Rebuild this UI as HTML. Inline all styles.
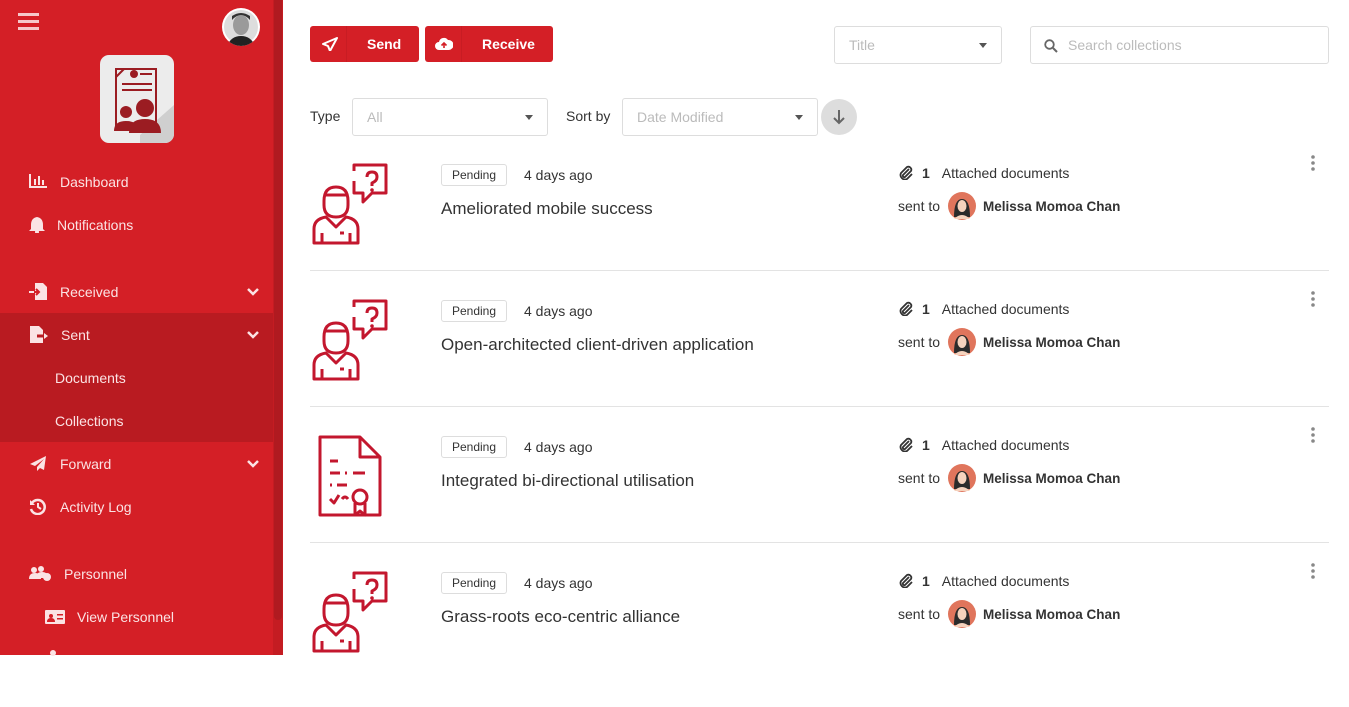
<!DOCTYPE html>
<html><head><meta charset="utf-8"><style>
*{box-sizing:border-box;margin:0;padding:0}
body{width:1349px;height:655px;overflow:hidden;font-family:"Liberation Sans",sans-serif;background:#fff;position:relative;color:#333}
.sb{position:absolute;left:0;top:0;width:273px;height:655px;background:#d41f26;color:#fde;}
.scr{position:absolute;left:273px;top:0;width:10px;height:655px;background:#c41c22}
.scr i{position:absolute;left:1px;top:0;width:8px;height:620px;background:#b01a20;border-radius:0 0 4px 4px}
.it{position:absolute;left:0;width:273px;font-size:14px;color:#fbe3e4;display:flex;align-items:center}
.it svg{position:absolute}
.chev{position:absolute;right:14px;top:50%;margin-top:-5px}
.sub{position:absolute;left:0;top:313px;width:273px;height:129px;background:#b91b21}
.abs{position:absolute}
.btn{position:absolute;top:26px;height:36px;background:#d41f26;border-radius:3px;color:#fff;font-weight:bold;font-size:14px;display:flex;align-items:center}
.sel{position:absolute;border:1px solid #ddd;border-radius:3px;color:#bbb;font-size:14px;display:flex;align-items:center;padding-left:14px}
.dd:after{content:"";position:absolute;right:14px;top:50%;margin-top:-2px;border:4px solid transparent;border-top:5px solid #555;border-bottom:0}
.row{position:absolute;left:310px;width:1019px;height:136px}
.row .line{position:absolute;left:0;right:0;bottom:0;height:1px;background:#e3e3e3}
.badge{position:absolute;left:131px;top:1px;width:66px;height:22px;border:1px solid #ddd;border-radius:3px;font-size:12px;color:#333;text-align:center;line-height:20px}
.ago{position:absolute;left:214px;top:4px;font-size:14px;color:#333}
.ttl{position:absolute;left:131px;top:36px;font-size:17px;color:#333}
.att{position:absolute;left:588px;top:2px;font-size:14px;color:#333}
.snt{position:absolute;left:588px;top:29px;font-size:14px;color:#333;display:flex;align-items:center}
.snt b{font-size:13.5px}
.kb{position:absolute;left:1000px;top:-9px}
</style></head><body>
<div class="sb">
 <svg class="abs" style="left:18px;top:13px" width="21" height="18"><rect y="0" width="21" height="3" fill="#f6c8ca"/><rect y="7" width="21" height="3" fill="#f6c8ca"/><rect y="14" width="21" height="3" fill="#f6c8ca"/></svg>
 <div class="abs" style="left:222px;top:8px;width:38px;height:38px;border-radius:50%;background:#fff;overflow:hidden"><svg width="38" height="38"><circle cx="19" cy="19" r="17" fill="#ddd"/><ellipse cx="19" cy="17" rx="8" ry="10" fill="#9a9a9a"/><path d="M10 12q9-10 18 0v-4q-9-6-18 0z" fill="#333"/><path d="M5 38q4-10 14-10t14 10z" fill="#222"/></svg></div>
 <div class="abs" style="left:100px;top:55px;width:74px;height:88px;background:#ececec;border-radius:9px;overflow:hidden">
  <svg width="74" height="88"><path d="M40 80l34-30v38H40z" fill="#cfcfcf"/><path d="M16 14h40v56H16z" fill="#ececec" stroke="#9b1c22" stroke-width="2"/><path d="M16 22l8-8" stroke="#9b1c22" stroke-width="2"/><circle cx="34" cy="19" r="4" fill="#9b1c22"/><rect x="40" y="18" width="12" height="2" fill="#9b1c22"/><rect x="22" y="28" width="30" height="2" fill="#9b1c22"/><rect x="22" y="34" width="30" height="2" fill="#9b1c22"/><circle cx="26" cy="57" r="6" fill="#9b1c22"/><circle cx="45" cy="53" r="9" fill="#9b1c22"/><path d="M14 76q0-10 12-10t12 10z" fill="#9b1c22"/><path d="M29 78q0-14 16-14t16 14z" fill="#9b1c22"/></svg>
 </div>
 <div class="it" style="top:172px;height:20px"><svg style="left:29px;top:2px" width="18" height="14"><path d="M1 0v13h17" stroke="#fbe3e4" stroke-width="2" fill="none"/><rect x="5" y="5" width="2" height="6" fill="#fbe3e4"/><rect x="9" y="2" width="2" height="9" fill="#fbe3e4"/><rect x="13" y="6" width="2" height="5" fill="#fbe3e4"/></svg><span style="margin-left:60px">Dashboard</span></div>
 <div class="it" style="top:215px;height:20px"><svg style="left:29px;top:1px" width="16" height="17"><path d="M8 1q6 1 6 8v4l2 2H0l2-2V9q0-7 6-8z" fill="#fbe3e4"/><circle cx="8" cy="16" r="2" fill="#fbe3e4"/></svg><span style="margin-left:57px">Notifications</span></div>
 <div class="it" style="top:282px;height:20px"><svg style="left:29px;top:0" width="18" height="19"><path d="M6 1h8l4 4v13H6z" fill="#fbe3e4"/><path d="M0 10h10M7 7l3 3-3 3" stroke="#d41f26" stroke-width="2" fill="none"/><path d="M0 10h5" stroke="#fbe3e4" stroke-width="2"/></svg><span style="margin-left:60px">Received</span><svg class="chev" width="12" height="9"><path d="M1 2l5 5 5-5" stroke="#fbe3e4" stroke-width="2.5" fill="none"/></svg></div>
 <div class="sub"></div>
 <div class="it" style="top:325px;height:20px"><svg style="left:29px;top:0" width="20" height="19"><path d="M1 1h9l4 4v13H1z" fill="#fbe3e4"/><path d="M8 11h8" stroke="#b91b21" stroke-width="3"/><path d="M15 8l4 3-4 3z" fill="#fbe3e4"/></svg><span style="margin-left:61px">Sent</span><svg class="chev" width="12" height="9"><path d="M1 2l5 5 5-5" stroke="#fbe3e4" stroke-width="2.5" fill="none"/></svg></div>
 <div class="it" style="top:368px;height:20px"><span style="margin-left:55px">Documents</span></div>
 <div class="it" style="top:411px;height:20px"><span style="margin-left:55px">Collections</span></div>
 <div class="it" style="top:454px;height:20px"><svg style="left:29px;top:1px" width="18" height="17"><path d="M17 1L1 9l5 2 9-7-7 8v4l3-3 4 2z" fill="#fbe3e4"/></svg><span style="margin-left:60px">Forward</span><svg class="chev" width="12" height="9"><path d="M1 2l5 5 5-5" stroke="#fbe3e4" stroke-width="2.5" fill="none"/></svg></div>
 <div class="it" style="top:497px;height:20px"><svg style="left:29px;top:1px" width="18" height="17"><path d="M3 5a7 7 0 1 1-1 6" stroke="#fbe3e4" stroke-width="2.5" fill="none"/><path d="M1 2v5h5z" fill="#fbe3e4"/><path d="M9 5v4l3 2" stroke="#fbe3e4" stroke-width="2" fill="none"/></svg><span style="margin-left:60px">Activity Log</span></div>
 <div class="it" style="top:564px;height:20px"><svg style="left:29px;top:2px" width="24" height="16"><circle cx="5" cy="4" r="3" fill="#fbe3e4"/><circle cx="12" cy="3" r="3" fill="#fbe3e4"/><path d="M0 13q0-6 6-6t6 6z" fill="#fbe3e4"/><path d="M7 12q0-6 6-6t6 6z" fill="#fbe3e4"/><circle cx="18" cy="11" r="4" fill="#fbe3e4"/></svg><span style="margin-left:64px">Personnel</span></div>
 <div class="it" style="top:607px;height:20px"><svg style="left:45px;top:3px" width="20" height="14"><rect width="20" height="14" rx="1" fill="#fbe3e4"/><circle cx="6" cy="6" r="2" fill="#d41f26"/><path d="M2 12q0-4 4-4t4 4z" fill="#d41f26"/><rect x="12" y="4" width="6" height="1.5" fill="#d41f26"/><rect x="12" y="8" width="6" height="1.5" fill="#d41f26"/></svg><span style="margin-left:77px">View Personnel</span></div>
 <svg class="abs" style="left:46px;top:648px" width="20" height="8"><circle cx="7" cy="5" r="3" fill="#fbe3e4"/></svg>
</div>
<div class="scr"><i></i></div>

<div class="btn" style="left:310px;width:109px"><svg style="position:absolute;left:12px;top:11px" width="16" height="14"><path d="M15 1L1 7l5 2 2 5z" stroke="#fff" stroke-width="2" fill="none" stroke-linejoin="round"/></svg><div style="position:absolute;left:36px;top:0;bottom:0;width:1px;background:#c81c23"></div><span style="margin-left:57px">Send</span></div>
<div class="btn" style="left:425px;width:128px"><svg style="position:absolute;left:10px;top:11px" width="18" height="14"><path d="M4 13a4 4 0 0 1 0-8 5 5 0 0 1 9-2 4 4 0 0 1 1 10z" fill="#fff"/><path d="M9 11V6M6.5 8.5L9 6l2.5 2.5" stroke="#d41f26" stroke-width="1.6" fill="none"/></svg><div style="position:absolute;left:36px;top:0;bottom:0;width:1px;background:#c81c23"></div><span style="margin-left:57px">Receive</span></div>

<div class="sel dd" style="left:834px;top:26px;width:168px;height:38px">Title</div>
<div class="sel" style="left:1030px;top:26px;width:299px;height:38px;padding-left:37px">Search collections<svg style="position:absolute;left:13px;top:12px" width="14" height="14"><circle cx="5.5" cy="5.5" r="4.3" stroke="#666" stroke-width="1.8" fill="none"/><path d="M9 9l4 4" stroke="#666" stroke-width="2"/></svg></div>

<div class="abs" style="left:310px;top:108px;font-size:14px;color:#333">Type</div>
<div class="sel dd" style="left:352px;top:98px;width:196px;height:38px">All</div>
<div class="abs" style="left:566px;top:108px;font-size:14px;color:#333">Sort by</div>
<div class="sel dd" style="left:622px;top:98px;width:196px;height:38px">Date Modified</div>
<div class="abs" style="left:821px;top:99px;width:36px;height:36px;border-radius:50%;background:#ddd"><svg width="36" height="36"><path d="M18 11v13M13 19l5 5 5-5" stroke="#666" stroke-width="2" fill="none"/></svg></div>

<div class="row" style="top:163px">
 <svg class="abs" style="left:0;top:0" width="80" height="82"><g stroke="#c3172e" stroke-width="3" fill="none" stroke-linejoin="round"><path d="M44 2h32v28H62l-9 9v-9h-9V18"/><path d="M49 2h-5v6"/><path d="M57 14q0-5 5-5t5 5q0 4-5 6v3"/><path d="M14 38q0-14 12-14t12 14v4q0 12-12 12t-12-12z"/><path d="M14 32h24"/><path d="M4 80V66q0-10 12-12l10 10 10-10q12 2 12 12v14z"/><path d="M12 70v10M40 70v10M30 70h4"/></g><circle cx="62" cy="27" r="1.8" fill="#c3172e"/></svg>
 <div class="badge">Pending</div><div class="ago">4 days ago</div><div class="ttl">Ameliorated mobile success</div>
 <div class="att"><svg style="vertical-align:-2px" width="16" height="15"><path d="M11 4L5 10a1.5 1.5 0 0 0 2 2l6-6a3 3 0 0 0-4-4L3 8a4.5 4.5 0 0 0 6 6l5-5" stroke="#333" stroke-width="1.8" fill="none"/></svg><b style="margin-left:8px">1</b><span style="margin-left:12px">Attached documents</span></div>
 <div class="snt">sent to<svg style="margin-left:8px" width="28" height="28"><circle cx="14" cy="14" r="14" fill="#e0755c"/><path d="M6 25q0-18 8-18t8 18z" fill="#2b2b2b"/><ellipse cx="14" cy="14" rx="4.5" ry="6" fill="#f5d2bd"/><path d="M6 27q8-8 16 0" fill="#f5d2bd"/></svg><b style="margin-left:7px">Melissa Momoa Chan</b></div>
 <svg class="kb" width="6" height="18"><circle cx="3" cy="3" r="1.8" fill="#888"/><circle cx="3" cy="9" r="1.8" fill="#888"/><circle cx="3" cy="15" r="1.8" fill="#888"/></svg>
 <div class="line" style="bottom:28px"></div>
</div>
<div class="row" style="top:299px">
 <svg class="abs" style="left:0;top:0" width="80" height="82"><g stroke="#c3172e" stroke-width="3" fill="none" stroke-linejoin="round"><path d="M44 2h32v28H62l-9 9v-9h-9V18"/><path d="M49 2h-5v6"/><path d="M57 14q0-5 5-5t5 5q0 4-5 6v3"/><path d="M14 38q0-14 12-14t12 14v4q0 12-12 12t-12-12z"/><path d="M14 32h24"/><path d="M4 80V66q0-10 12-12l10 10 10-10q12 2 12 12v14z"/><path d="M12 70v10M40 70v10M30 70h4"/></g><circle cx="62" cy="27" r="1.8" fill="#c3172e"/></svg>
 <div class="badge">Pending</div><div class="ago">4 days ago</div><div class="ttl">Open-architected client-driven application</div>
 <div class="att"><svg style="vertical-align:-2px" width="16" height="15"><path d="M11 4L5 10a1.5 1.5 0 0 0 2 2l6-6a3 3 0 0 0-4-4L3 8a4.5 4.5 0 0 0 6 6l5-5" stroke="#333" stroke-width="1.8" fill="none"/></svg><b style="margin-left:8px">1</b><span style="margin-left:12px">Attached documents</span></div>
 <div class="snt">sent to<svg style="margin-left:8px" width="28" height="28"><circle cx="14" cy="14" r="14" fill="#e0755c"/><path d="M6 25q0-18 8-18t8 18z" fill="#2b2b2b"/><ellipse cx="14" cy="14" rx="4.5" ry="6" fill="#f5d2bd"/><path d="M6 27q8-8 16 0" fill="#f5d2bd"/></svg><b style="margin-left:7px">Melissa Momoa Chan</b></div>
 <svg class="kb" width="6" height="18"><circle cx="3" cy="3" r="1.8" fill="#888"/><circle cx="3" cy="9" r="1.8" fill="#888"/><circle cx="3" cy="15" r="1.8" fill="#888"/></svg>
 <div class="line" style="bottom:28px"></div>
</div>
<div class="row" style="top:435px">
 <svg class="abs" style="left:0;top:0" width="80" height="82"><g stroke="#c3172e" stroke-width="3" fill="none" stroke-linejoin="round"><path d="M10 2h40l20 20v58H10z"/><path d="M50 2v20h20"/><path d="M20 26h8M20 38h10M35 38h2M43 38h12M20 50h2M27 50h10"/><path d="M20 64l4 4 5-8M32 64q3-4 6 0"/><circle cx="50" cy="62" r="7"/><path d="M45 68v12l5-4 5 4V68"/></g></svg>
 <div class="badge">Pending</div><div class="ago">4 days ago</div><div class="ttl">Integrated bi-directional utilisation</div>
 <div class="att"><svg style="vertical-align:-2px" width="16" height="15"><path d="M11 4L5 10a1.5 1.5 0 0 0 2 2l6-6a3 3 0 0 0-4-4L3 8a4.5 4.5 0 0 0 6 6l5-5" stroke="#333" stroke-width="1.8" fill="none"/></svg><b style="margin-left:8px">1</b><span style="margin-left:12px">Attached documents</span></div>
 <div class="snt">sent to<svg style="margin-left:8px" width="28" height="28"><circle cx="14" cy="14" r="14" fill="#e0755c"/><path d="M6 25q0-18 8-18t8 18z" fill="#2b2b2b"/><ellipse cx="14" cy="14" rx="4.5" ry="6" fill="#f5d2bd"/><path d="M6 27q8-8 16 0" fill="#f5d2bd"/></svg><b style="margin-left:7px">Melissa Momoa Chan</b></div>
 <svg class="kb" width="6" height="18"><circle cx="3" cy="3" r="1.8" fill="#888"/><circle cx="3" cy="9" r="1.8" fill="#888"/><circle cx="3" cy="15" r="1.8" fill="#888"/></svg>
 <div class="line" style="bottom:28px"></div>
</div>
<div class="row" style="top:571px">
 <svg class="abs" style="left:0;top:0" width="80" height="82"><g stroke="#c3172e" stroke-width="3" fill="none" stroke-linejoin="round"><path d="M44 2h32v28H62l-9 9v-9h-9V18"/><path d="M49 2h-5v6"/><path d="M57 14q0-5 5-5t5 5q0 4-5 6v3"/><path d="M14 38q0-14 12-14t12 14v4q0 12-12 12t-12-12z"/><path d="M14 32h24"/><path d="M4 80V66q0-10 12-12l10 10 10-10q12 2 12 12v14z"/><path d="M12 70v10M40 70v10M30 70h4"/></g><circle cx="62" cy="27" r="1.8" fill="#c3172e"/></svg>
 <div class="badge">Pending</div><div class="ago">4 days ago</div><div class="ttl">Grass-roots eco-centric alliance</div>
 <div class="att"><svg style="vertical-align:-2px" width="16" height="15"><path d="M11 4L5 10a1.5 1.5 0 0 0 2 2l6-6a3 3 0 0 0-4-4L3 8a4.5 4.5 0 0 0 6 6l5-5" stroke="#333" stroke-width="1.8" fill="none"/></svg><b style="margin-left:8px">1</b><span style="margin-left:12px">Attached documents</span></div>
 <div class="snt">sent to<svg style="margin-left:8px" width="28" height="28"><circle cx="14" cy="14" r="14" fill="#e0755c"/><path d="M6 25q0-18 8-18t8 18z" fill="#2b2b2b"/><ellipse cx="14" cy="14" rx="4.5" ry="6" fill="#f5d2bd"/><path d="M6 27q8-8 16 0" fill="#f5d2bd"/></svg><b style="margin-left:7px">Melissa Momoa Chan</b></div>
 <svg class="kb" width="6" height="18"><circle cx="3" cy="3" r="1.8" fill="#888"/><circle cx="3" cy="9" r="1.8" fill="#888"/><circle cx="3" cy="15" r="1.8" fill="#888"/></svg>
</div>
</body></html>
